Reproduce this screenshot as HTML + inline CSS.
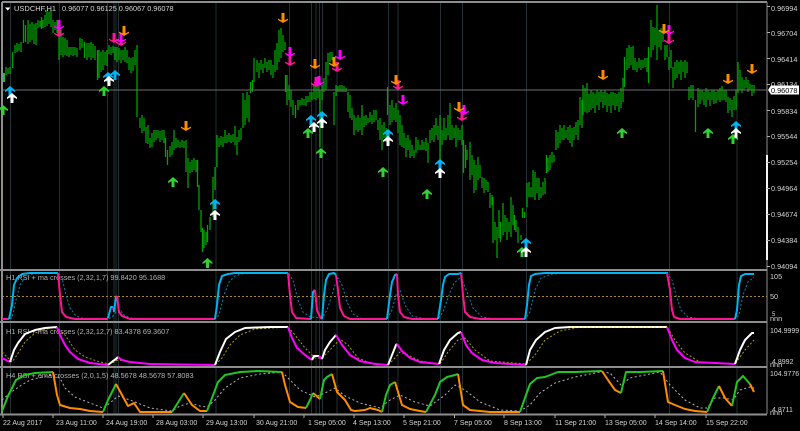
<!DOCTYPE html>
<html><head><meta charset="utf-8"><title>USDCHF,H1</title>
<style>
html,body{margin:0;padding:0;background:#000;width:800px;height:431px;overflow:hidden}
svg{display:block;filter:blur(.25px)}
text{font-family:"Liberation Sans",sans-serif;fill:#d4d4d4;font-size:7.3px}
.b{font-size:7px}
.i{font-size:7.3px;fill:#b4b4b4}
</style></head><body>
<svg width="800" height="431" viewBox="0 0 800 431">
<defs>
<path id="u" d="M-.5 4.4L4.5 0L9.500 4.400V6L6 4.300V10H3V4.300L-.5 6Z"/>
<path id="d" d="M-.5 5.600L3 7.300V0H6V7.300L9.500 5.600V7L4.500 10L-.5 7Z"/>
<clipPath id="mc"><rect x="2" y="3" width="765" height="265"/></clipPath>
</defs>
<rect width="800" height="431" fill="#000"/>
<!-- period separators -->
<path stroke="#223034" stroke-width="1" fill="none" d="M10.5 3V414M59.5 3V414M107.5 3V414M114 3V414M116 3V414M118.5 3V414M216 3V414M289.5 3V414M311.5 3V414M316 3V414M319.5 3V414M322.5 3V414M337 3V414M388.5 3V414M398 3V414M440.5 3V414M462.5 3V414M526.5 3V414M669.5 3V414M737 3V414"/>
<!-- price bars -->
<g clip-path="url(#mc)">
<path fill="none" stroke="#00a400" stroke-width="1.300" d="M6 67V75M8 68V74M10 67V74M12.500 52V68M15 45V53M17 43V52M19 44V51M21 42V52M23.500 20V43M25.500 25V42M28 20V44M30 24V42M32 22V40M34 24V44M36 23V45M38 20V28M40 21V27M41.500 17V29M43 20V28M45 15V27M47 10V26M49 12V24M51 10V27M53 20V33M55 22V30M57 20V33M59 33V60M61 30V55M63 37V57M65 38V55M67 40V56M69 47V57M71 47V55M73 47V56M75 47V55M77 48V57M80 38V50M82 39V48M84.500 42V58M87 43V60M89 43V57M91 42V60M93 44V58M95 46V60M97.500 50V80M99 50V78M101 52V72M103 50V70M105 52V65M107 50V66M109 45V54M111 47V55M113 46V53M115 47V60M117 47V62M119 48V60M121 50V63M123 50V60M125 47V62M127 50V63M129 57V70M131 58V73M133 57V71M135 50V65M137 45V117M140 118V128M142 115V133M144 118V131M146 127V143M148 125V144M150 138V148M152 133V147M154 130V142M156 130V140M158 130V138M160 131V142M162 130V140M164 130V143M165.500 138V157M167.500 150V165M170 146V157M172 142V155M174 130V150M176 138V148M178 140V147M180 142V148M182 140V147M184 141V148M186 140V172M188 158V188M190 162V173M192 160V172M194 158V170M196 160V172M197.500 160V187M199 185V210M201 210V232M202.500 228V252M204 230V248M206 232V245M207.500 225V242M210 217V230M213 177V217M215 167V190M217 135V167M219 138V147M221 136V145M223 137V147M225 130V143M227 135V143M229 133V142M231 135V143M233 134V142M235 126V145M237 137V155M239 130V142M241 128V140M243 93V128M245 100V125M247 92V118M249 95V122M250.500 82V93M252.500 80V92M254 58V82M257 60V72M259 63V78M261 60V70M263 64V73M265 58V68M267 62V72M269 60V70M271 60V75M273 65V78M275 50V72M277 43V70M279 30V62M281 28V58M283 35V52M285 42V50M285.500 75V92M287 75V105M289 85V100M291 90V107M293 100V115M295.500 105V118M298 100V110M300 100V106M302 98V105M304 99V105M306 96V106M308 96V102M310 92V102M312 92V100M314 85V99M316 86V100M318 85V98M320 90V147M322 85V100M324 78V92M326 62V90M328 53V75M330 52V62M332 52V60M334 92V125M336 85V96M338 86V92M340 85V92M342 85V92M344 86V92M346 88V92M348 92V112M350 95V118M352 108V120M354 115V135M356 118V130M358 115V132M360 118V130M362 105V135M364 116V127M366 115V125M368 118V123M370 112V122M372 115V124M374 110V122M376 110V120M378 120V130M380 118V140M382 125V150M384 122V138M386 128V142M387.500 87V115M390 105V125M392 100V122M394 108V120M396 103V122M398 110V133M400 115V145M402 125V147M404 133V148M406 138V157M408 135V150M410 140V158M412 145V156M414 150V158M416 137V153M418 140V150M420 145V150M422 140V150M424 142V150M426 138V151M428 143V163M430 130V143M432 128V140M434 125V142M436 118V135M438 126V140M440 115V160M442 130V145M444 118V140M446 128V140M448 115V135M450 103V140M452 125V140M454 128V138M456 125V147M458 128V140M460 130V140M462 125V145M463.500 140V173M465.500 145V168M467 150V160M470 142V180M472 155V175M474 160V193M476 165V190M478 157V180M480 165V178M482 177V188M484 178V193M486 180V190M488 182V192M490 193V208M492 195V205M493 197V243M495 222V240M497 227V258M499 210V238M500.500 222V242M503 203V235M505 215V232M507 218V240M509 222V232M511 197V237M513 205V225M514.500 215V230M516 220V232M518 227V243M521 235V240M522.500 208V218M524.500 212V218M527 183V207M529 182V197M531 187V197M533 170V197M535 172V200M537 178V193M539 178V200M541 187V198M543 182V195M545 178V194M546.500 155V173M548 158V172M550 155V170M552 152V163M554 155V162M556 130V150M558 132V148M560 125V143M562 128V140M564 125V140M566 130V138M568 127V140M570 125V143M572 128V147M574 127V140M576 122V135M578 120V140M580 97V125M582 100V128M583 85V115M585 88V112M587 83V113M589 94V112M591 90V110M593 92V108M595 94V113M597 90V105M599 92V110M601 90V102M603 92V108M605 90V105M607 93V112M609 94V106M611 92V113M613 92V105M615 93V110M617 94V106M619 92V112M621 88V108M623 78V102M624.500 57V87M627 48V70M629 45V68M631 47V65M633 46V70M635 58V70M637 62V72M639 58V68M641 60V70M643 60V68M645 58V67M647 58V72M648.500 47V83M651 20V57M653 27V50M655 28V45M657 5V60M659 30V47M661 28V50M663 27V42M665 45V60M667 45V57M669 57V70M671 50V68M673 67V88M675 62V80M677 60V78M679 62V74M681 60V80M683 62V72M685 60V78M687 62V73M689 87V100M691 85V98M693 85V100M695.500 100V132M698 88V107M700 90V104M702 90V100M704 92V105M706 88V107M708 90V100M710 92V106M712 90V100M714 90V104M716 92V103M718 90V100M720 88V102M722 86V100M724 90V100M726 90V102M728 97V113M730 98V110M732 100V117M734 96V110M736 90V110M738 62V93M740 70V90M742 77V93M744 80V90M746 77V88M748 80V92M750 84V90M752 85V96M754 85V93"/>
</g>
<rect x="2" y="73" width="3" height="9" fill="#20c020"/>
<!-- hlines -->
<path stroke="#6e6e6e" stroke-width="1" fill="none" d="M2 90H767"/>
<path stroke="#b08a10" stroke-width="1" stroke-dasharray="2 2" fill="none" d="M2 296.500H767"/>
<!-- frames -->
<path stroke="#8e8e8e" stroke-width="2" fill="none" d="M2 2H767M2 2V414M0 270H767M0 322H767M0 367H767M0 414.500H767"/>
<path stroke="#8e8e8e" stroke-width="1" fill="none" d="M767 2V414"/>
<rect x="766" y="155" width="2" height="105" fill="#f4f4f4"/>
<!-- arrows -->
<g fill="#32d232">
<use href="#u" x="-1.500" y="105"/><use href="#u" x="99.500" y="86"/><use href="#u" x="168.500" y="177"/><use href="#u" x="203" y="258"/><use href="#u" x="303.500" y="128"/><use href="#u" x="316.500" y="148"/><use href="#u" x="378.500" y="167"/><use href="#u" x="422.500" y="189"/><use href="#u" x="517.500" y="247"/><use href="#u" x="617.500" y="128"/><use href="#u" x="703.500" y="128"/><use href="#u" x="728.500" y="134"/>
</g>
<g fill="#00b4f8">
<use href="#u" x="5.500" y="86"/><use href="#u" x="103.500" y="72"/><use href="#u" x="110.500" y="70"/><use href="#u" x="210.500" y="199"/><use href="#u" x="306.500" y="115"/><use href="#u" x="317.500" y="111"/><use href="#u" x="383.500" y="129"/><use href="#u" x="435.500" y="159"/><use href="#u" x="521.500" y="238"/><use href="#u" x="731.500" y="121"/>
</g>
<g fill="#fff">
<use href="#u" x="7.500" y="93"/><use href="#u" x="104.500" y="76"/><use href="#u" x="210.500" y="210"/><use href="#u" x="309.500" y="122"/><use href="#u" x="317.500" y="118"/><use href="#u" x="383.500" y="136"/><use href="#u" x="435.500" y="168"/><use href="#u" x="521.500" y="247"/><use href="#u" x="731.500" y="128"/>
</g>
<g fill="#ff1493">
<use href="#d" x="54.500" y="27"/><use href="#d" x="109.500" y="33"/><use href="#d" x="116.500" y="36"/><use href="#d" x="285.500" y="56"/><use href="#d" x="311.500" y="77"/><use href="#d" x="332.500" y="62"/><use href="#d" x="393.500" y="80"/><use href="#d" x="457.500" y="111"/><use href="#d" x="664.500" y="34"/>
</g>
<g fill="#ff00ff">
<use href="#d" x="54.500" y="20"/><use href="#d" x="116.500" y="33"/><use href="#d" x="285.500" y="47"/><use href="#d" x="314.500" y="76"/><use href="#d" x="335.500" y="50"/><use href="#d" x="398.500" y="95"/><use href="#d" x="459.500" y="105"/><use href="#d" x="664.500" y="25"/>
</g>
<g fill="#ff8c00">
<use href="#d" x="119.500" y="26"/><use href="#d" x="181.500" y="121"/><use href="#d" x="278.500" y="13"/><use href="#d" x="310.500" y="59"/><use href="#d" x="329.500" y="57"/><use href="#d" x="391.500" y="75"/><use href="#d" x="454.500" y="102"/><use href="#d" x="598.500" y="70"/><use href="#d" x="659.500" y="24"/><use href="#d" x="723.500" y="74"/><use href="#d" x="747.500" y="64"/>
</g>
<!-- indicator labels -->
<text class="i" x="6" y="280">H1 RSI + ma crosses (2,32,1,7) 99.8420 95.1688</text>
<text class="i" x="6" y="334">H1 RSI + ma crosses (2,32,12,7) 83.4378 69.3607</text>
<text class="i" x="6" y="378">H4 RSI + ema crosses (2,0,1,5) 48.5678 48.5678 57.8083</text>
<!-- indicator 1 -->
<g fill="none" stroke-width="2" stroke-linejoin="round">
<polyline stroke="#0a86b4" stroke-width="1" stroke-dasharray="2 2" points="2,319 12,318 16,300 20,285 25,277 35,273 58,273 62,278 66,295 70,308 76,316 85,319 108,319 112,317 116,312 120,310 124,315 130,318 150,319 215,319 219,315 224,295 229,282 235,276 245,273 288,273 293,280 298,300 303,312 310,317 322,318 327,310 332,295 335,285 338,278 342,285 347,302 353,314 362,319 387,319 392,310 396,295 400,290 405,305 412,316 425,319 438,319 443,312 448,298 454,283 461,277 467,292 473,308 482,317 495,319 525,319 530,312 535,290 541,278 552,274 570,273 667,273 672,280 676,295 681,310 688,317 700,319 735,319 739,315 743,295 748,282 754,277"/>
<polyline stroke="#ff1493" points="2,319 9,319"/>
<polyline stroke="#00b4f0" points="9,319 12,305 14,285 17,278 22,274 30,273 58,273"/>
<polyline stroke="#ff1493" points="58,273 60,295 62,312 66,317 75,319 108,319"/>
<polyline stroke="#00b4f0" points="108,318 111,307 113,307"/>
<polyline stroke="#ff1493" points="113,307 114,312"/>
<polyline stroke="#00b4f0" points="114,312 116,297 117,296"/>
<polyline stroke="#ff1493" points="117,296 119,312 122,316 130,319 215,319"/>
<polyline stroke="#00b4f0" points="215,319 217,305 219,285 222,276 228,274 235,273 288,273"/>
<polyline stroke="#ff1493" points="288,273 290,295 292,312 296,318 310,319 311,319"/>
<polyline stroke="#00b4f0" points="311,319 313,292 315,290"/>
<polyline stroke="#ff1493" points="315,290 317,310 320,317 322,319"/>
<polyline stroke="#00b4f0" points="322,319 324,295 326,280 329,274 334,273 336,275"/>
<polyline stroke="#ff1493" points="336,275 338,290 340,308 344,316 350,319 387,319"/>
<polyline stroke="#00b4f0" points="387,319 390,295 392,282 395,275 397,274"/>
<polyline stroke="#ff1493" points="397,274 398,295 400,312 404,317 412,319 438,319"/>
<polyline stroke="#00b4f0" points="438,319 441,300 443,285 445,277 449,274 458,274 461,273"/>
<polyline stroke="#ff1493" points="461,273 463,295 465,312 470,317 480,319 525,319"/>
<polyline stroke="#00b4f0" points="525,319 527,305 529,285 531,276 535,274 545,273 668,273"/>
<polyline stroke="#ff1493" points="667,273 670,290 672,310 674,317 680,319 735,319"/>
<polyline stroke="#00b4f0" points="735,319 737,310 739,285 741,276 745,274 754,274"/>
</g>
<!-- indicator 2 -->
<g fill="none" stroke-width="2" stroke-linejoin="round">
<polyline stroke="#a89a10" stroke-width="1" stroke-dasharray="2 2" points="2,352 12,362 17,355 25,342 35,333 50,328 57,328 65,335 75,350 85,357 100,362 110,364 118,360 125,361 150,364 215,365 222,358 230,345 240,335 255,329 288,327 295,335 305,348 315,358 322,358 330,350 340,339 348,345 358,358 370,363 388,365 395,358 400,352 408,355 420,361 440,364 448,352 458,340 465,338 475,350 490,361 526,364 535,355 545,340 560,331 580,327 667,327 675,340 685,353 700,362 735,364 745,350 754,340"/>
<polyline stroke="#ff00ff" points="2,358 10,362"/>
<polyline stroke="#fff" points="10,362 14,350 18,343 25,334 35,330 45,328 57,327"/>
<polyline stroke="#ff00ff" points="57,327 60,335 65,345 70,352 78,359 90,363 108,365"/>
<polyline stroke="#fff" points="108,365 113,361 116,359 118,357"/>
<polyline stroke="#ff00ff" points="118,357 122,360 130,362 150,364 215,365"/>
<polyline stroke="#fff" points="215,365 220,352 226,339 235,332 245,328 270,327 288,327"/>
<polyline stroke="#ff00ff" points="288,327 292,338 297,348 305,355 312,360"/>
<polyline stroke="#fff" points="312,360 314,356 319,356"/>
<polyline stroke="#ff00ff" points="319,356 322,359"/>
<polyline stroke="#fff" points="322,359 325,350 330,342 336,335"/>
<polyline stroke="#ff00ff" points="336,335 342,345 350,355 360,361 375,364 388,365"/>
<polyline stroke="#fff" points="388,365 392,355 396,345 397,344"/>
<polyline stroke="#ff00ff" points="397,344 402,351 410,358 420,362 439,364"/>
<polyline stroke="#fff" points="439,364 444,350 450,340 458,333 461,332"/>
<polyline stroke="#ff00ff" points="461,332 466,345 472,353 482,360 495,363 526,365"/>
<polyline stroke="#fff" points="526,365 530,350 536,340 545,332 555,328 570,327 667,327"/>
<polyline stroke="#ff00ff" points="667,327 672,340 677,350 685,358 695,362 735,364"/>
<polyline stroke="#fff" points="735,364 740,350 745,340 752,333 754,333"/>
<polyline stroke="#ffea00" stroke-width="1" stroke-dasharray="2 2" points="570,327 667,327"/>
</g>
<!-- indicator 3 -->
<g fill="none" stroke-width="2" stroke-linejoin="round">
<polyline stroke="#b4b4b4" stroke-width="1" stroke-dasharray="2 2.500" points="2,400 10,393 20,386 30,380 50,375 60,378 65,388 75,397 90,403 103,408 110,403 118,396 130,400 150,408 172,411 180,406 190,403 200,406 207,407 215,400 225,388 240,378 260,374 282,372 290,380 300,390 315,397 325,393 335,388 345,396 360,403 380,408 390,400 400,395 415,402 430,406 445,395 455,385 465,390 480,402 500,410 520,411 530,405 540,393 555,383 575,377 600,372 610,373 621,385 630,378 660,372 670,385 685,400 700,408 707,408 715,398 725,398 733,400 740,390 750,387 754,388"/>
<polyline stroke="#22c522" points="2,411 8,396 16,380 25,375 35,373 53,372"/>
<polyline stroke="#ff8c00" points="53,372 57,395 60,405 70,408 80,409 90,411 103,412"/>
<polyline stroke="#22c522" points="103,412 108,400 116,384"/>
<polyline stroke="#ff8c00" points="116,384 122,395 128,406 134,403 140,412 172,412"/>
<polyline stroke="#22c522" points="172,412 184,393"/>
<polyline stroke="#ff8c00" points="184,393 192,405 200,411 207,411"/>
<polyline stroke="#22c522" points="207,411 212,398 218,382 225,375 240,372 258,371 282,372"/>
<polyline stroke="#ff8c00" points="282,372 285,385 290,402 298,407 306,408"/>
<polyline stroke="#22c522" points="306,408 310,400 313,393"/>
<polyline stroke="#ff8c00" points="313,393 320,399"/>
<polyline stroke="#22c522" points="320,399 324,380 327,377 332,374"/>
<polyline stroke="#ff8c00" points="332,374 337,392 345,400 351,410 355,411 365,410 370,408 378,410 382,412"/>
<polyline stroke="#22c522" points="382,412 386,395 390,385 395,382"/>
<polyline stroke="#ff8c00" points="395,382 402,405 410,409 420,411 426,412"/>
<polyline stroke="#22c522" points="426,412 435,395 440,382 447,377 455,375 458,374"/>
<polyline stroke="#ff8c00" points="458,374 463,405 470,410 480,411 490,412 520,412"/>
<polyline stroke="#22c522" points="520,412 526,395 530,384 537,378 545,377 558,372 575,372 602,371"/>
<polyline stroke="#ff8c00" points="602,371 608,380 615,390 621,393"/>
<polyline stroke="#22c522" points="621,393 626,372 640,372 663,371"/>
<polyline stroke="#ff8c00" points="663,371 668,402 675,405 685,409 695,411 707,412"/>
<polyline stroke="#22c522" points="707,412 713,398 719,386"/>
<polyline stroke="#ff8c00" points="719,386 725,398 732,406"/>
<polyline stroke="#22c522" points="732,406 737,382 743,376 750,384"/>
<polyline stroke="#ff8c00" points="750,384 754,392"/>
</g>
<!-- top label -->
<path d="M5 7.500H10.500L7.750 10.500Z" fill="#fff"/>
<text x="14" y="11" style="font-size:7.500px">USDCHF,H1</text>
<text x="62" y="11">0.96077 0.96125 0.96067 0.96078</text>
<!-- price axis -->
<path stroke="#b0b0b0" stroke-width="1" fill="none" d="M767 6.500h3M767 32.500h3M767 58.500h3M767 84.500h3M767 110.500h3M767 136.500h3M767 162.500h3M767 188.500h3M767 214.500h3M767 240.500h3M767 266.500h3"/>
<text x="771" y="11">0.96994</text>
<text x="771" y="36">0.96704</text>
<text x="771" y="62">0.96414</text>
<text x="771" y="87">0.96134</text>
<text x="771" y="114">0.95834</text>
<text x="771" y="139">0.95544</text>
<text x="771" y="165">0.95254</text>
<text x="771" y="191">0.94964</text>
<text x="771" y="217">0.94674</text>
<text x="771" y="243">0.94384</text>
<text x="771" y="269">0.94094</text>
<path d="M768 90L771 85.500H799V94.500H771Z" fill="#fff"/>
<text x="771" y="93" style="fill:#000">0.96078</text>
<text x="770" y="279">105</text>
<text x="770" y="299">50</text>
<text x="772" y="316" style="font-size:6px">5</text>
<text x="770" y="321">nnn</text>
<text x="770" y="333" style="font-size:7px">104.9999</text>
<text x="772" y="364" style="font-size:7px">4.8992</text>
<text x="770" y="367">nnn</text>
<text x="770" y="376" style="font-size:7px">104.9776</text>
<text x="772" y="412" style="font-size:7px">4.8711</text>
<text x="770" y="415">nnn</text>
<!-- time axis -->
<path stroke="#b0b0b0" stroke-width="1" fill="none" d="M3 415v3M53 415v3M103 415v3M153 415v3M203 415v3M254 415v3M304 415v3M354 415v3M404 415v3M454.500 415v3M504 415v3M555 415v3M605 415v3M655 415v3M706 415v3"/>
<text class="b" x="3" y="425">22 Aug 2017</text>
<text class="b" x="56" y="425">23 Aug 11:00</text>
<text class="b" x="106" y="425">24 Aug 19:00</text>
<text class="b" x="156" y="425">28 Aug 03:00</text>
<text class="b" x="206" y="425">29 Aug 13:00</text>
<text class="b" x="256" y="425">30 Aug 21:00</text>
<text class="b" x="308" y="425">1 Sep 05:00</text>
<text class="b" x="353" y="425">4 Sep 13:00</text>
<text class="b" x="403" y="425">5 Sep 21:00</text>
<text class="b" x="454" y="425">7 Sep 05:00</text>
<text class="b" x="504" y="425">8 Sep 13:00</text>
<text class="b" x="555" y="425">11 Sep 21:00</text>
<text class="b" x="605" y="425">13 Sep 05:00</text>
<text class="b" x="655" y="425">14 Sep 14:00</text>
<text class="b" x="706" y="425">15 Sep 22:00</text>
</svg>
</body></html>
